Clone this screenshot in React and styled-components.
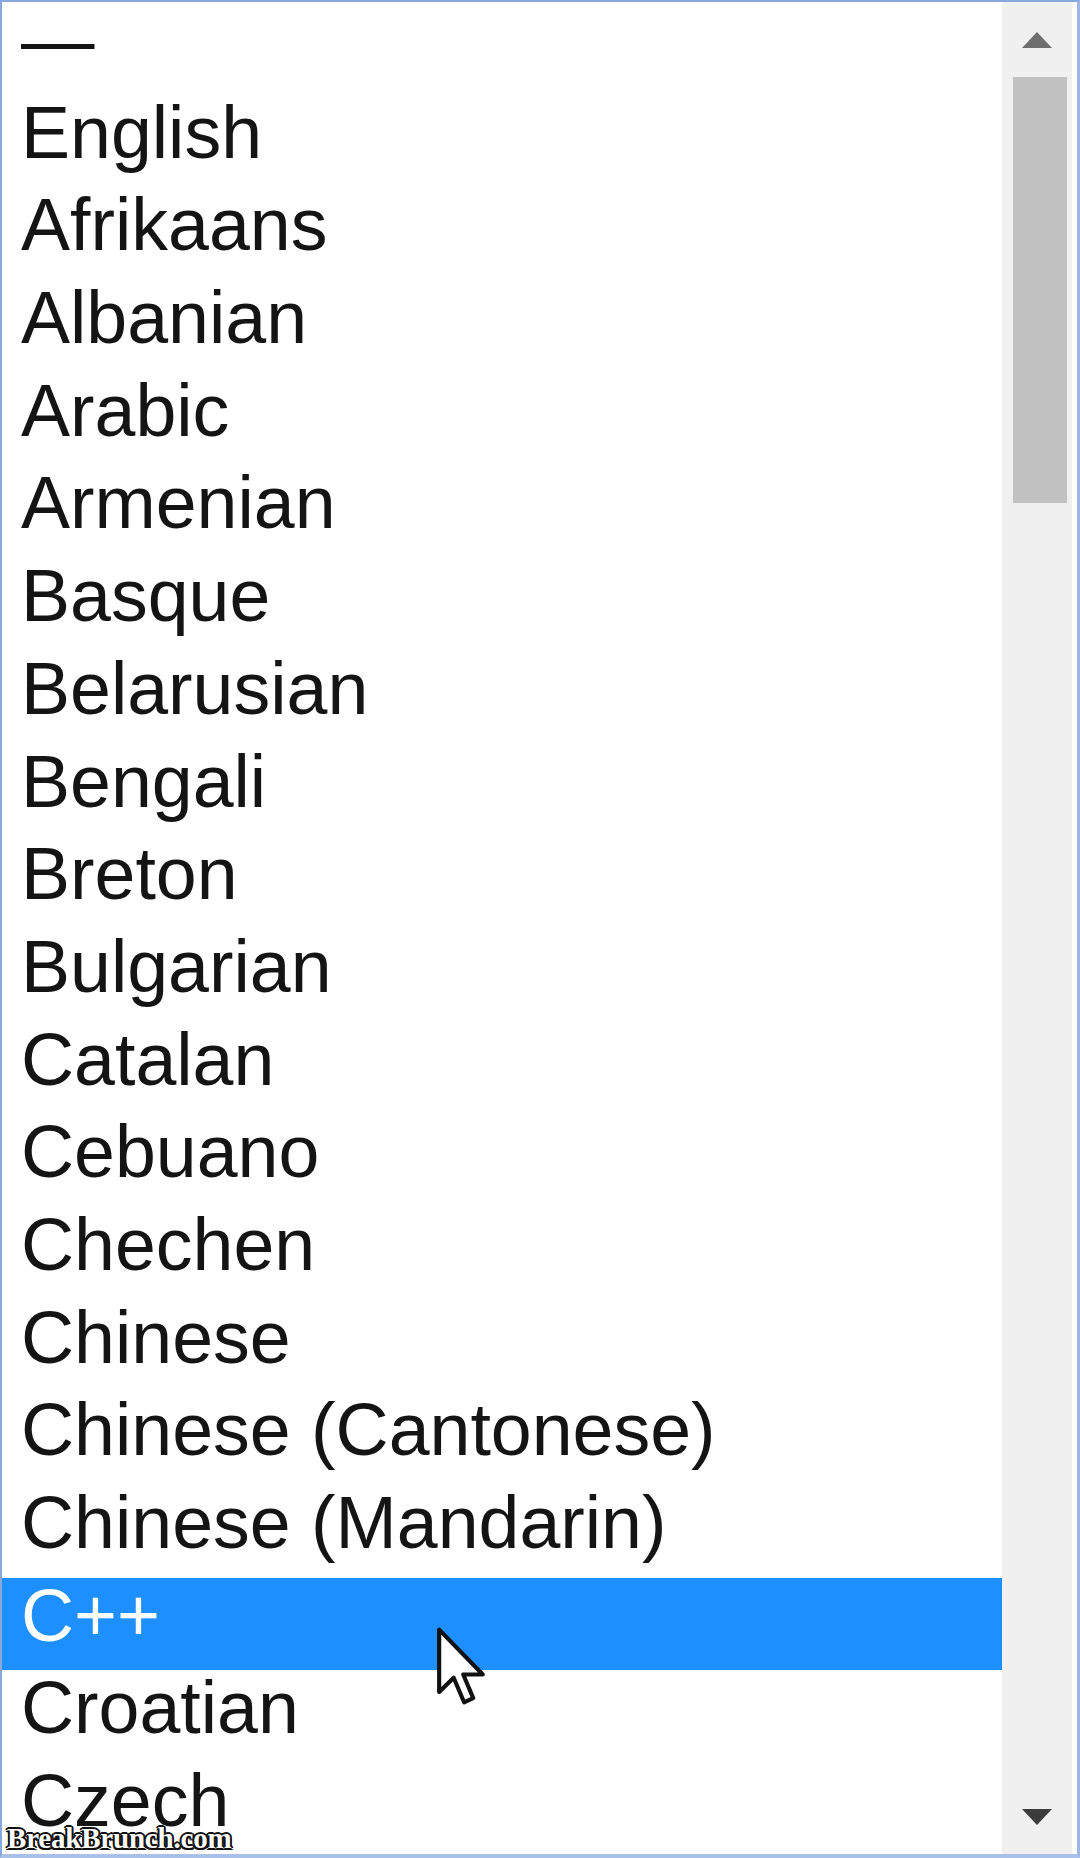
import React from "react";
import styled, { createGlobalStyle } from "styled-components";

const GlobalStyle = createGlobalStyle`
    html, body {
        margin: 0;
        padding: 0;
        background: #ffffff;
    }
`;

const Frame = styled.div`
    position: relative;
    box-sizing: border-box;
    width: 1080px;
    height: 1858px;
    display: flex;
    overflow: hidden;
    background: #ffffff;
    border: 2px solid #86a8dc;
    border-bottom: 4px solid #a9c0e8;
    border-right: 3px solid #9db8e4;
`;

const List = styled.div`
    flex: 1;
    overflow: hidden;
`;

const Row = styled.div`
    box-sizing: border-box;
    height: 92.7px;
    padding: 0 0 16px 19px;
    line-height: 76.7px;
    font-family: "Liberation Sans", Arial, sans-serif;
    font-size: 73.5px;
    white-space: nowrap;
    color: ${(p) => (p.$selected ? "#ffffff" : "#141414")};
    background: ${(p) => (p.$selected ? "#1e8fff" : "transparent")};
`;

const Scrollbar = styled.div`
    width: 70px;
    margin-right: 5px;
    display: flex;
    flex-direction: column;
    background: #f0f0f0;
`;

const ArrowButton = styled.div`
    height: 75px;
    flex-shrink: 0;
    display: flex;
    align-items: center;
    justify-content: center;
`;

const Thumb = styled.div`
    height: 426px;
    margin: 0 5px 0 11px;
    background: #c1c1c1;
`;

const Track = styled.div`
    flex: 1;
`;

const Cursor = styled.svg`
    position: absolute;
    left: 433px;
    top: 1623px;
`;

const Watermark = styled.div`
    position: absolute;
    left: 5px;
    bottom: 1px;
    font-family: "Liberation Serif", "Times New Roman", serif;
    font-weight: bold;
    font-size: 29px;
    line-height: 29px;
    color: #ffffff;
    letter-spacing: -0.2px;
    text-shadow:
        -2px 0 0 #111, 2px 0 0 #111, 0 -2px 0 #111, 0 2px 0 #111,
        -1.5px -1.5px 0 #111, 1.5px -1.5px 0 #111, -1.5px 1.5px 0 #111, 1.5px 1.5px 0 #111;
`;

const languages = [
    "—",
    "English",
    "Afrikaans",
    "Albanian",
    "Arabic",
    "Armenian",
    "Basque",
    "Belarusian",
    "Bengali",
    "Breton",
    "Bulgarian",
    "Catalan",
    "Cebuano",
    "Chechen",
    "Chinese",
    "Chinese (Cantonese)",
    "Chinese (Mandarin)",
    "C++",
    "Croatian",
    "Czech",
];

function UpArrow() {
    return (
        <svg width="32" height="16" viewBox="0 0 32 16">
            <polygon points="16,0 31,16 1,16" fill="#6e6e6e" />
        </svg>
    );
}

function DownArrow() {
    return (
        <svg width="32" height="16" viewBox="0 0 32 16">
            <polygon points="1,0 31,0 16,16" fill="#3c3c3c" />
        </svg>
    );
}

export default function App() {
    return (
        <>
            <GlobalStyle />
            <Frame>
                <List>
                    {languages.map((name) => (
                        <Row key={name} $selected={name === "C++"}>
                            {name}
                        </Row>
                    ))}
                </List>
                <Scrollbar>
                    <ArrowButton>
                        <UpArrow />
                    </ArrowButton>
                    <Thumb />
                    <Track />
                    <ArrowButton>
                        <DownArrow />
                    </ArrowButton>
                </Scrollbar>
                <Cursor width="54" height="84" viewBox="0 0 13 20">
                    <path
                        d="M1 1 L1 16 L4.5 12.6 L7 18.5 L9.2 17.5 L6.8 11.8 L11.5 11.8 Z"
                        fill="#ffffff"
                        stroke="#111111"
                        strokeWidth="1"
                        strokeLinejoin="round"
                    />
                </Cursor>
                <Watermark>BreakBrunch.com</Watermark>
            </Frame>
        </>
    );
}
